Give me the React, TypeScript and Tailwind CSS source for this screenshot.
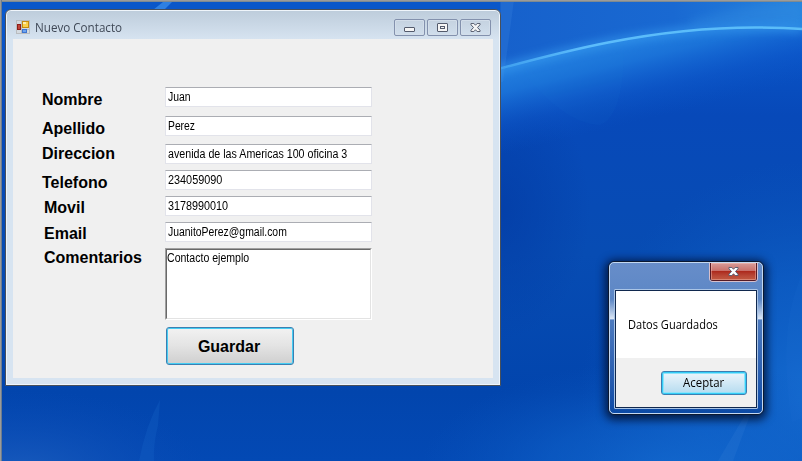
import type { ReactNode } from "react";

function Wallpaper() {
  return (
    <svg className="absolute inset-0" width="802" height="461" viewBox="0 0 802 461">
      <defs>
        <linearGradient id="base" x1="0" y1="0" x2="0" y2="1">
          <stop offset="0" stopColor="#0b5bd0" />
          <stop offset="0.25" stopColor="#0749b9" />
          <stop offset="0.55" stopColor="#074cb3" />
          <stop offset="0.85" stopColor="#0245ad" />
          <stop offset="1" stopColor="#0349b4" />
        </linearGradient>
        <linearGradient id="sky" x1="0" y1="0" x2="1" y2="0">
          <stop offset="0" stopColor="#1660cb" />
          <stop offset="0.6" stopColor="#1969d2" />
          <stop offset="1" stopColor="#2583de" />
        </linearGradient>
        <linearGradient id="under" gradientUnits="userSpaceOnUse" x1="590" y1="38" x2="612" y2="128">
          <stop offset="0" stopColor="#2887e4" />
          <stop offset="0.35" stopColor="#1d77db" stopOpacity="0.85" />
          <stop offset="0.7" stopColor="#125fd0" stopOpacity="0.35" />
          <stop offset="1" stopColor="#0a55c8" stopOpacity="0" />
        </linearGradient>
        <linearGradient id="arc" gradientUnits="userSpaceOnUse" x1="490" y1="0" x2="802" y2="0">
          <stop offset="0" stopColor="#3a9bed" />
          <stop offset="0.3" stopColor="#5cbcfb" />
          <stop offset="1" stopColor="#5abdf8" />
        </linearGradient>
        <radialGradient id="right">
          <stop offset="0" stopColor="#146bd0" />
          <stop offset="0.5" stopColor="#1063ca" stopOpacity="0.65" />
          <stop offset="1" stopColor="#0b57c0" stopOpacity="0" />
        </radialGradient>
        <radialGradient id="left">
          <stop offset="0" stopColor="#1a5cbd" />
          <stop offset="1" stopColor="#0b4ab4" stopOpacity="0" />
        </radialGradient>
        <radialGradient id="dark">
          <stop offset="0" stopColor="#033da6" stopOpacity="0.8" />
          <stop offset="1" stopColor="#033da6" stopOpacity="0" />
        </radialGradient>
        <filter id="glow" x="-20%" y="-50%" width="140%" height="200%" colorInterpolationFilters="sRGB"><feGaussianBlur stdDeviation="4" /></filter>
        <filter id="fine" x="-20%" y="-50%" width="140%" height="200%" colorInterpolationFilters="sRGB"><feGaussianBlur stdDeviation="0.7" /></filter>
      </defs>
      <rect width="802" height="461" fill="url(#base)" />
      <ellipse cx="810" cy="400" rx="230" ry="240" fill="url(#right)" />
      <ellipse cx="670" cy="470" rx="250" ry="110" fill="url(#right)" opacity="0.8" />
      <ellipse cx="20" cy="475" rx="190" ry="85" fill="url(#left)" />
      <ellipse cx="500" cy="210" rx="90" ry="130" fill="url(#dark)" />
      <path d="M480 74C560 52 650 27.500 755 27.500Q785 27.500 802 29V170H480Z" fill="url(#under)" />
      <path d="M480 0H802V29Q785 27.500 755 27.500C650 27.500 560 52 480 74Z" fill="url(#sky)" />
      <path d="M690 20Q750 3 802 2V25H690Z" fill="#3a93e4" opacity="0.3" filter="url(#glow)" />
      <path d="M520 68Q565 125 600 125Q625 115 624 40Z" fill="#2a83dc" opacity="0.06" />
      <path d="M480 74C560 52 650 27.500 755 27.500Q785 27.500 802 29" fill="none" stroke="#3596ed" strokeWidth="8" opacity="0.7" filter="url(#glow)" />
      <path d="M480 74C560 52 650 27.500 755 27.500Q785 27.500 802 29" fill="none" stroke="url(#arc)" strokeWidth="2.400" filter="url(#fine)" />
      <path d="M501 0H514L503 82H501Z" fill="#4b96e8" opacity="0.18" />
      <path d="M0 0H500V10H0Z" fill="#0a57c9" />
      <path d="M153 10L163 2H172L164 10Z" fill="#2e80e2" filter="url(#fine)" />
      <path d="M139 461Q146 425 160 400L158 425Q153 445 154 461Z" fill="#1765c8" opacity="0.3" filter="url(#fine)" />
      <path d="M718 461L745 415H750L733 461Z" fill="#3e87da" opacity="0.18" filter="url(#fine)" />
      <path d="M802 275Q777 330 792 422L802 418Z" fill="#2272d4" opacity="0.13" filter="url(#fine)" />
      <rect width="802" height="2" fill="#7f8a91" />
      <rect width="802" height="1" fill="#9b9b99" />
      <rect width="2" height="461" fill="#6d7c8d" />
      <rect width="1" height="461" fill="#9b9b99" />
    </svg>
  );
}

function AppIcon() {
  return (
    <svg width="14" height="14" viewBox="0 0 14 14" shapeRendering="crispEdges">
      <rect x="0.500" y="0.500" width="13" height="13" fill="#d4dae0" stroke="#b9bcbf" />
      <path d="M5.500 0V14M0 9.500H14" stroke="#b9bcbf" />
      <rect x="6.500" y="1.500" width="6" height="6" fill="#fbd04b" stroke="#c58a10" />
      <rect x="7" y="2" width="3" height="2" fill="#fdeeb0" />
      <rect x="1.500" y="4.500" width="3" height="5" fill="#c0443a" stroke="#8f1d17" />
      <rect x="6.500" y="9.500" width="4" height="3" fill="#6ca4f0" stroke="#3e74cf" />
    </svg>
  );
}

function CrossGlyph({ fill, edge }: { fill: string; edge: string }) {
  return (
    <svg width="11" height="9" viewBox="0 0 12 10">
      <path d="M1 .5H4.200L6 2.500 7.800.5H11V2L8.200 5 11 8V9.500H7.800L6 7.500 4.200 9.500H1V8L3.800 5 1 2Z" fill={fill} stroke={edge} strokeWidth="1.100" />
    </svg>
  );
}

function CaptionButton({ children }: { children: ReactNode }) {
  return (
    <button className="flex h-[17px] w-[31px] items-center justify-center rounded-[2px] border border-[#8391ad] bg-linear-to-b from-[#c5d2e0] to-[#d0deec] shadow-[inset_0_0_0_1px_#d3deea]">
      {children}
    </button>
  );
}

const fields = [
  { label: "Nombre", value: "Juan", row: "mt-0", shift: "mt-[3px]", scale: "scale-x-[0.87]" },
  { label: "Apellido", value: "Perez", row: "mt-[9px]", shift: "mt-[3px]", scale: "scale-x-[0.86]" },
  { label: "Direccion", value: "avenida de las Americas 100 oficina 3", row: "mt-2", shift: "mt-0", scale: "scale-x-[0.89]" },
  { label: "Telefono", value: "234059090", row: "mt-[6px]", shift: "mt-[3px]", scale: "scale-x-[0.905]" },
  { label: "Movil", value: "3178990010", row: "mt-[6px]", shift: "mt-[2px] pl-[2px]", scale: "scale-x-[0.9]" },
  { label: "Email", value: "JuanitoPerez@gmail.com", row: "mt-[6px]", shift: "mt-[2px] pl-[2px]", scale: "scale-x-[0.868]" },
];

function ContactWindow() {
  return (
    <section className="absolute left-[5px] top-[9px] flex h-[377px] w-[496px] flex-col rounded-t-[6px] border border-[#48505b] bg-[#d7e4f1] bg-linear-to-b from-[#bdccdb] to-[#d7e4f1] to-[30px] px-[6px] shadow-[inset_0_0_0_1px_#eff5fb]">
      <header className="flex h-[29px] shrink-0 items-start pl-1 pr-[3px]">
        <div className="mt-[10px]"><AppIcon /></div>
        <h1 className="ml-[5px] mt-[9px] w-[100px] origin-left scale-x-[0.97] whitespace-nowrap font-['Open_Sans',sans-serif] text-[12px] leading-[18px] text-[#3f4856]">
          Nuevo Contacto
        </h1>
        <div className="ml-auto mt-[9px] flex gap-[2px]">
          <CaptionButton>
            <span className="mt-1 h-[5px] w-[11px] rounded-[1px] border border-[#545b6c] bg-[#f5f5f5]" />
          </CaptionButton>
          <CaptionButton>
            <span className="flex h-[9px] w-[11px] items-center justify-center rounded-[1px] border border-[#545b6c] bg-[#f5f5f5]">
              <span className="h-[3px] w-[5px] border border-[#545b6c]" />
            </span>
          </CaptionButton>
          <CaptionButton><CrossGlyph fill="#f5f5f5" edge="#545b6c" /></CaptionButton>
        </div>
      </header>
      <main className="ml-px h-[339px] w-[480px] bg-[#f0f0f0] pl-[29px] pt-12 font-['Liberation_Sans',Arial,sans-serif]">
        {fields.map((f) => (
          <div key={f.label} className={`flex h-5 items-start ${f.row}`}>
            <label className={`w-[123px] text-[16px] font-bold leading-5 text-black ${f.shift}`}>{f.label}</label>
            <div className="h-[20px] w-[207px] border border-[#e2e3ea] border-t-[#abadb3] bg-white pl-[2px]">
              <span className={`block w-max origin-left whitespace-nowrap text-[12px] leading-[19px] text-black ${f.scale}`}>{f.value}</span>
            </div>
          </div>
        ))}
        <div className="mt-[6px] flex h-[72px] items-start">
          <label className="w-[123px] pl-[2px] text-[16px] font-bold leading-5 text-black">Comentarios</label>
          <div className="h-[72px] w-[207px] border border-white border-l-[#a0a0a0] border-t-[#a0a0a0]">
            <div className="h-full border border-[#e3e3e3] border-l-[#696969] border-t-[#696969] bg-white">
              <span className="block w-max origin-left scale-x-[0.88] text-[12px] leading-[17px] text-black">Contacto ejemplo</span>
            </div>
          </div>
        </div>
        <button className="ml-[124px] mt-[7px] flex h-[38px] w-[128px] items-center justify-center rounded-[3px] border border-[#3c7fb1] bg-linear-to-b from-[#f2f2f2] from-0% via-[#e4e4e4] via-48% to-[#cfcfcf] to-100% pr-[2px] pt-[2px] text-[16px] font-bold text-black shadow-[inset_0_0_0_1px_#45cdf3]">
          Guardar
        </button>
      </main>
    </section>
  );
}

function SavedDialog() {
  return (
    <section className="absolute left-[608px] top-[261px] h-[154px] w-[156px] rounded-[6px] border border-[#0b1830] bg-[#2f68b5] shadow-[0_2px_9px_3px_rgba(0,10,35,0.75)]">
      <div className="flex h-full flex-col rounded-[5px] border border-[#c3d8f1] bg-linear-to-b from-[#678dc9] from-0% via-[#5e88c6] via-20% to-[#0b4aa6] to-100%">
        <header className="flex h-[26px] shrink-0 justify-end pr-[4px]">
          <button className="h-[19px] w-[49px] rounded-b-[4px] border border-t-0 border-[#d7bfcb]">
            <span className="flex h-full items-center justify-center rounded-b-[3px] border border-t-0 border-[#551a25] bg-linear-to-b from-[#d79b98] from-0% via-[#c9716b] via-45% to-[#bd4f38] to-100%">
              <span className="flex h-full w-full items-center justify-center bg-linear-to-b from-transparent from-48% via-[#ad2a1d] via-50% to-[#c76447]/40 to-100% shadow-[inset_0_0_0_1px_rgba(255,205,195,0.4)]">
                <CrossGlyph fill="#ffffff" edge="#565c70" />
              </span>
            </span>
          </button>
        </header>
        <div className="flex flex-1 bg-linear-to-b from-transparent from-8% via-[#dce7f5] via-24% to-transparent to-25% px-[4px] pb-[4px]">
          <div className="flex h-[120px] w-[144px] rounded-[1px] border border-[#aac5e6]">
            <div className="flex flex-1 flex-col border border-[#10284e] bg-[#f0f0f0] font-['Open_Sans',sans-serif] text-[12px] text-black">
              <div className="flex h-[67px] items-center bg-white pl-3">
                <p className="w-max origin-left scale-x-[0.92] whitespace-nowrap">Datos Guardados</p>
              </div>
              <div className="flex flex-1 items-start justify-end pr-[9px] pt-[13px]">
                <button className="flex h-6 w-[86px] items-center justify-center rounded-[3px] border border-[#3c7fb1] bg-linear-to-b from-[#edf6fb] from-0% via-[#d2e9f6] via-48% to-[#b4dbef] to-100% shadow-[inset_0_0_0_1px_#33cdf7,inset_0_0_0_2px_#8fe3fa]">
                  <span className="scale-x-[0.95]">Aceptar</span>
                </button>
              </div>
            </div>
          </div>
        </div>
      </div>
    </section>
  );
}

export default function App() {
  return (
    <div className="relative h-[461px] w-[802px] overflow-hidden">
      <Wallpaper />
      <ContactWindow />
      <SavedDialog />
    </div>
  );
}
